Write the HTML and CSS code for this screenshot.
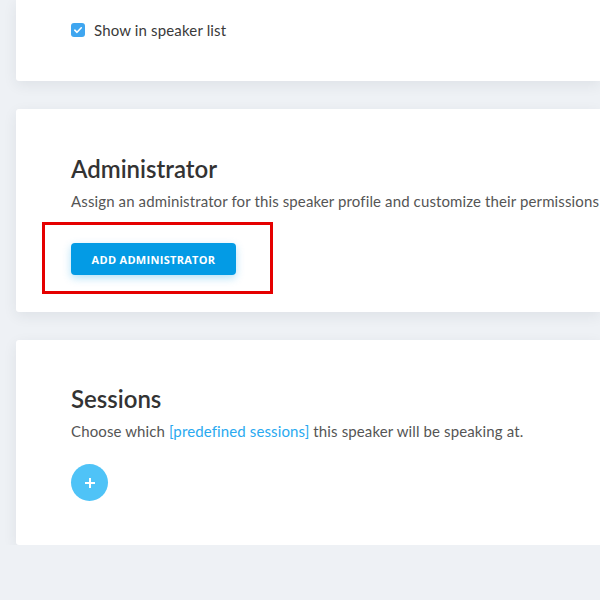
FILE: index.html
```html
<!DOCTYPE html>
<html>
<head>
<meta charset="utf-8">
<link rel="stylesheet" href="styles.css">
</head>
<body>
<div class="page">
  <section class="card card-top">
    <label class="check">
      <span class="box"><svg width="10" height="10" viewBox="0 0 10 10"><path d="M1.8 5.2 L4 7.3 L8.3 2.8" fill="none" stroke="#fff" stroke-width="1.6" stroke-linecap="round" stroke-linejoin="round"/></svg></span>
      <span>Show in speaker list</span>
    </label>
  </section>
  <section class="card card-admin">
    <h2>Administrator</h2>
    <p>Assign an administrator for this speaker profile and customize their permissions</p>
    <div class="btn-wrap">
      <button class="btn">ADD ADMINISTRATOR</button>
      <div class="highlight"></div>
    </div>
  </section>
  <section class="card card-sessions">
    <h2>Sessions</h2>
    <p>Choose which <a href="#">[predefined sessions]</a> this speaker will be speaking at.</p>
    <button class="add"><svg width="12" height="12" viewBox="0 0 12 12"><path d="M6 1 V11 M1 6 H11" stroke="#fff" stroke-width="2"/></svg></button>
  </section>
</div>
</body>
</html>
```
FILE: styles.css
```css
html, body {
  margin: 0;
  padding: 0;
  background: #eef1f5;
  font-family: Lato, "Open Sans", sans-serif;
  overflow: hidden;
}
.page {
  padding-left: 16px;
  display: flex;
  flex-direction: column;
  gap: 28px;
}
.card {
  background: #fff;
  border-radius: 3px 0 0 3px;
  box-shadow: 0 4px 14px rgba(40, 50, 70, 0.08);
  padding-left: 55px;
}
.card-top {
  height: 81px;
  border-top-left-radius: 0;
  box-sizing: border-box;
  padding-top: 21px;
}
.check {
  display: flex;
  align-items: center;
  gap: 9px;
  font-size: 15px;
  letter-spacing: 0.15px;
  color: #3a3a3a;
}
.box {
  width: 14px;
  height: 14px;
  border-radius: 3px;
  background: #3fa6f0;
  display: flex;
  align-items: center;
  justify-content: center;
}
.card-admin {
  height: 203px;
  box-sizing: border-box;
  padding-top: 45px;
}
h2 {
  margin: 0;
  font-size: 24px;
  font-weight: 600;
  color: #333;
  line-height: 30px;
}
p {
  margin: 6px 0 0;
  font-size: 15px;
  letter-spacing: 0.12px;
  color: #555;
  line-height: 22px;
}
a {
  color: #29a9f0;
  text-decoration: none;
}
.btn-wrap {
  position: relative;
  margin-top: 31px;
  width: 165px;
}
.btn {
  display: block;
  width: 165px;
  height: 32px;
  border: none;
  border-radius: 4px;
  background: #039be5;
  color: #fff;
  font-family: "Open Sans", sans-serif;
  font-weight: 700;
  font-size: 11px;
  letter-spacing: 0.3px;
  box-shadow: 0 3px 8px rgba(3, 155, 229, 0.3);
}
.highlight {
  position: absolute;
  left: -29px;
  top: -21px;
  width: 231px;
  height: 72px;
  box-sizing: border-box;
  border: 3px solid #e50000;
}
.card-sessions {
  height: 205px;
  box-sizing: border-box;
  padding-top: 44px;
}
.add {
  margin-top: 22px;
  width: 37px;
  height: 37px;
  border-radius: 50%;
  border: none;
  background: #4fc3f7;
  display: flex;
  align-items: center;
  justify-content: center;
  padding: 0;
}
```
